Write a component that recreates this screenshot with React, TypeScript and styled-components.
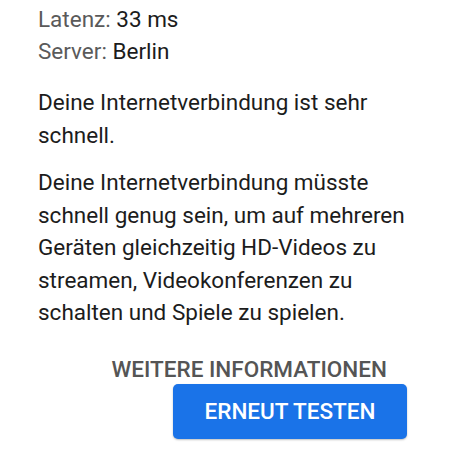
import styled, { createGlobalStyle } from "styled-components";

const GlobalStyle = createGlobalStyle`
  body {
    margin: 0;
    background: #ffffff;
    font-family: Roboto, "Noto Sans", sans-serif;
  }
`;

export default function App() {
  return (
    <>
      <GlobalStyle />
      <Page>
        <Stats>
          <StatRow>
            <Label>Latenz:</Label> 33 ms
          </StatRow>
          <StatRow>
            <Label>Server:</Label> Berlin
          </StatRow>
        </Stats>
        <Paragraph>Deine Internetverbindung ist sehr schnell.</Paragraph>
        <Paragraph>
          Deine Internetverbindung müsste schnell genug sein, um auf mehreren
          Geräten gleichzeitig HD-Videos zu streamen, Videokonferenzen zu
          schalten und Spiele zu spielen.
        </Paragraph>
        <Actions>
          <TextButton>Weitere Informationen</TextButton>
          <PrimaryButton>Erneut testen</PrimaryButton>
        </Actions>
      </Page>
    </>
  );
}

const Page = styled.div`
  width: 450px;
  height: 450px;
  box-sizing: border-box;
  padding: 3px 43px 0 38px;
  color: #1c1c1c;
  font-size: 22.5px;
  overflow: hidden;
`;

const Stats = styled.div`
  display: flex;
  flex-direction: column;
  margin-bottom: 19px;
`;

const StatRow = styled.div`
  line-height: 32px;
`;

const Label = styled.span`
  color: #5a5a5a;
`;

const Paragraph = styled.p`
  margin: 0 0 15px;
  line-height: 32.5px;
`;

const Actions = styled.div`
  display: flex;
  flex-direction: column;
  align-items: flex-end;
  margin-top: 28px;
`;

const TextButton = styled.button`
  border: none;
  background: none;
  padding: 0 20px 0 0;
  font-family: Roboto, sans-serif;
  font-weight: 500;
  font-size: 22.5px;
  line-height: 24px;
  text-transform: uppercase;
  color: #555555;
  margin-bottom: 3px;
`;

const PrimaryButton = styled.button`
  width: 234px;
  height: 55px;
  border: none;
  border-radius: 5px;
  background: #1a73e8;
  color: #ffffff;
  font-family: Roboto, sans-serif;
  font-weight: 500;
  font-size: 22.5px;
  text-transform: uppercase;
  box-shadow: 0 1px 2px rgba(0, 0, 0, 0.25);
`;
